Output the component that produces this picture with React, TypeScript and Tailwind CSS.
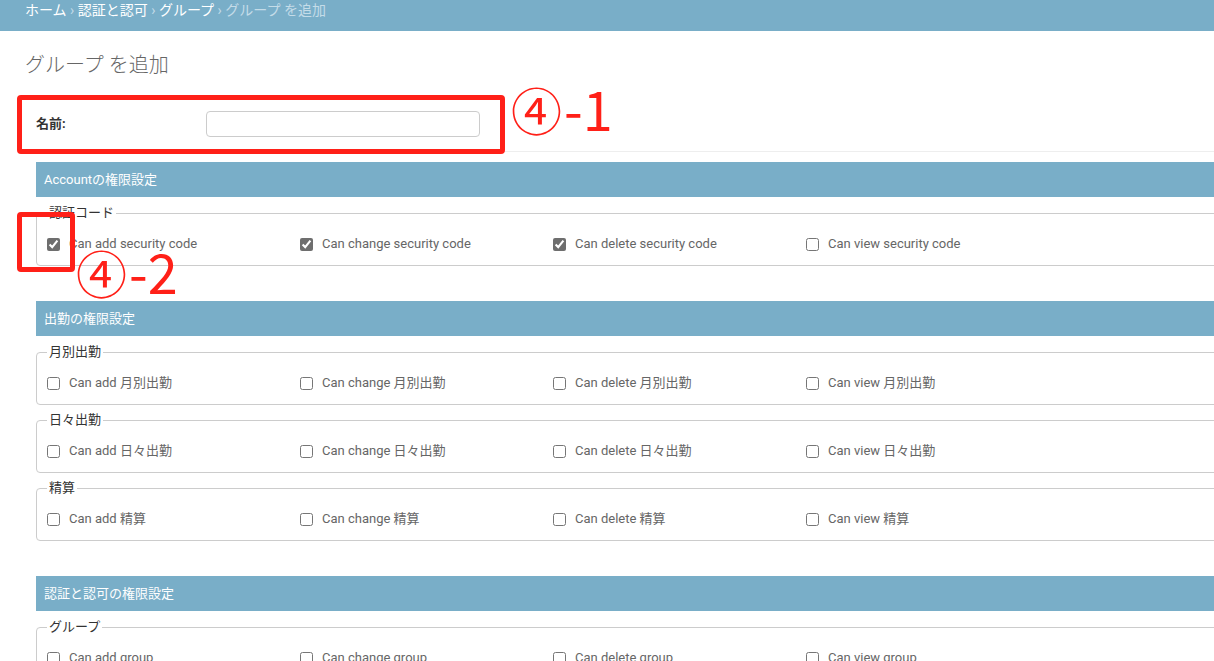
import React from "react";

const font = { fontFamily: '"Roboto", "Noto Sans CJK JP", sans-serif' };

type Perm = { label: string; checked?: boolean };

function PermFieldset({ legend, perms }: { legend: string; perms: Perm[] }) {
  return (
    <fieldset className="mt-[6px] rounded-[4px] border border-[#ccc] pl-[10px] first-of-type:mt-[7px]">
      <legend className="px-[2px] text-[13px] leading-[18px] text-[#333]">{legend}</legend>
      <div className="flex pt-[12px] pb-[11px]">
        {perms.map((p) => (
          <label key={p.label} className="flex w-[253px] items-center gap-[9px] text-[13px] leading-[20px] text-[#666]">
            <input
              type="checkbox"
              defaultChecked={p.checked}
              className="m-0 h-[13px] w-[13px] accent-[#6e6e6e]"
            />
            <span>{p.label}</span>
          </label>
        ))}
      </div>
    </fieldset>
  );
}

function Module({ title, className, children }: { title: string; className?: string; children: React.ReactNode }) {
  return (
    <div className={className}>
      <h2 className="flex h-[35px] items-center bg-[#79aec8] pl-[8px] text-[13px] font-normal text-white">{title}</h2>
      {children}
    </div>
  );
}

const crud = (name: string, checked: boolean[] = [false, false, false, false]): Perm[] => [
  { label: `Can add ${name}`, checked: checked[0] },
  { label: `Can change ${name}`, checked: checked[1] },
  { label: `Can delete ${name}`, checked: checked[2] },
  { label: `Can view ${name}`, checked: checked[3] },
];

function Note({ n, className }: { n: string; className: string }) {
  return (
    <div className={`absolute flex items-baseline text-[#ff2018] ${className}`}>
      <span className="text-[51px] leading-[60px]" style={{ fontFamily: '"Noto Sans CJK JP", sans-serif' }}>
        ④
      </span>
      <span className="ml-[2px] text-[54px] font-normal leading-[60px]" style={{ fontFamily: '"Noto Sans CJK JP", sans-serif' }}>
        -{n}
      </span>
    </div>
  );
}

export default function App() {
  return (
    <div className="relative h-[661px] w-[1214px] overflow-hidden bg-white" style={font}>
      {/* breadcrumbs */}
      <div className="h-[31px] bg-[#79aec8] px-[25px] text-[14px] leading-[20px] text-white">
        ホーム <span className="text-[#c4dce8]">›</span> 認証と認可 <span className="text-[#c4dce8]">›</span> グループ{" "}
        <span className="text-[#c4dce8]">› グループ を追加</span>
      </div>

      <div className="w-[1260px]">
        <h1 className="ml-[25px] mt-[20px] text-[20px] font-light leading-[28px] text-[#666]">グループ を追加</h1>

        {/* name row */}
        <div className="ml-[25px] mt-[22px] flex items-center border-b border-[#eee] pb-[14px] pt-[10px] pl-[11px]">
          <label className="w-[170px] text-[13px] font-bold text-[#333]">名前:</label>
          <input
            type="text"
            className="h-[26px] w-[274px] rounded-[4px] border border-[#ccc] bg-white px-[6px] text-[13px]"
          />
        </div>

        <div className="ml-[36px]">
          <Module title="Accountの権限設定" className="mt-[10px]">
            <PermFieldset legend="認証コード" perms={crud("security code", [true, true, true, false])} />
          </Module>

          <Module title="出勤の権限設定" className="mt-[35px]">
            <PermFieldset legend="月別出勤" perms={crud("月別出勤")} />
            <PermFieldset legend="日々出勤" perms={crud("日々出勤")} />
            <PermFieldset legend="精算" perms={crud("精算")} />
          </Module>

          <Module title="認証と認可の権限設定" className="mt-[35px]">
            <PermFieldset legend="グループ" perms={crud("group")} />
          </Module>
        </div>
      </div>

      {/* annotations */}
      <div className="absolute left-[17px] top-[95px] h-[59px] w-[488px] rounded-[4px] border-[5px] border-[#ff2018]" />
      <Note n="1" className="left-[511px] top-[78px]" />
      <div className="absolute left-[17px] top-[212px] h-[60px] w-[58px] rounded-[4px] border-[5px] border-[#ff2018]" />
      <Note n="2" className="left-[76px] top-[241px]" />
    </div>
  );
}
